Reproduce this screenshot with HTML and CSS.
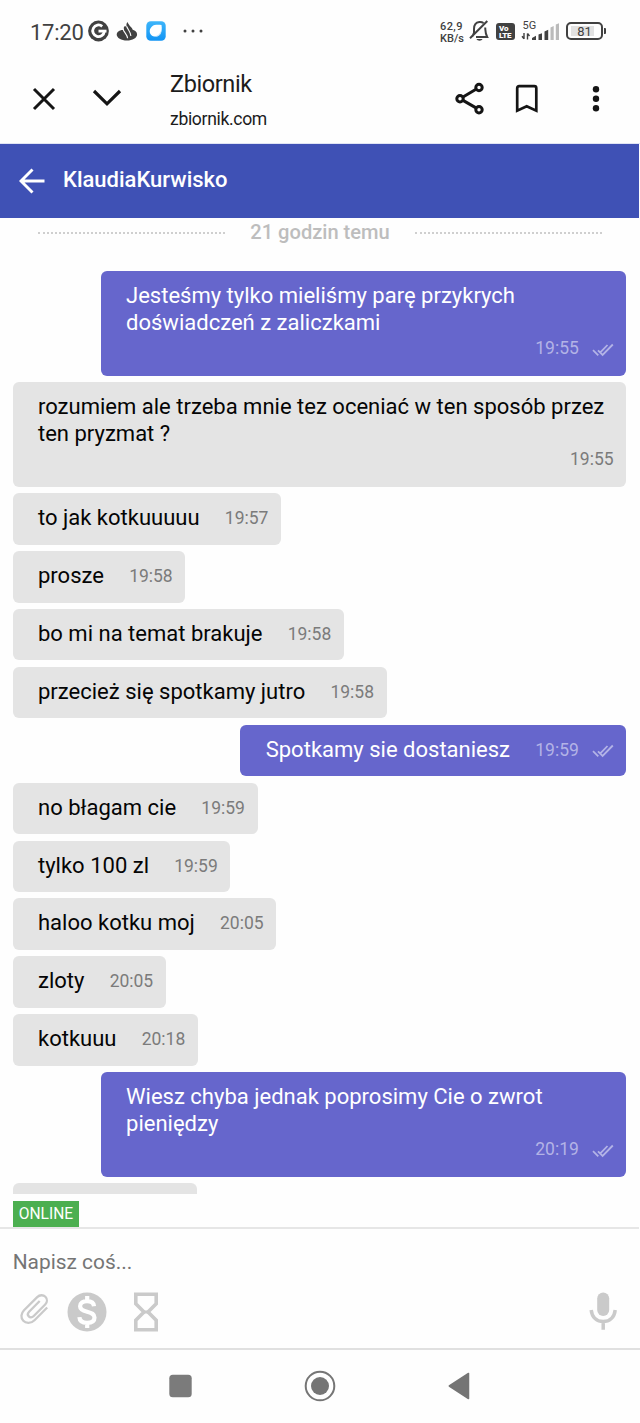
FILE: index.html
```html
<!DOCTYPE html>
<html lang="pl">
<head>
<meta charset="utf-8">
<title>Zbiornik</title>
<link rel="stylesheet" href="styles.css">
</head>
<body>
<svg width="0" height="0" class="defs">
  <symbol id="checks" viewBox="0 0 22 14"><path d="M1 7.2 6.3 12.4M6 7.3l4.6 4.6L20.8 1.5M8.6 9.2 15.5 2" fill="none" stroke="currentColor" stroke-width="1.8"/></symbol>
</svg>
<div class="phone">
  <div class="status">
    <span class="clock">17:20</span>
    <svg class="google" width="22" height="22" viewBox="0 0 22 22"><circle cx="10.500" cy="11" r="10.400" fill="#414141"/><path d="M14.200 6.300A5.800 5.800 0 1 0 16.300 11.300" fill="none" stroke="#fff" stroke-width="2.800"/><path d="M10.500 9.700h8v2.800h-8z" fill="#fff"/></svg>
    <svg class="flame" width="22" height="21" viewBox="0 0 22 21"><path d="M5.500 9C2.500 9.800.7 11.500.7 13.500c0 3.400 4.600 6 10.200 6s10.200-2.600 10.200-6c0-2.300-1.800-3.900-4.400-4.700C16.500 7 14 5.500 13.400 4.300 12.500 3 11.800 2 11.400 1 10 3 10.200 4.800 11.200 6.500L9 5C7.500 5.500 7.500 8 8 9Z" fill="#414141"/><path d="M7 7.500c.2 3.500 4.200 5.500 4.600 9.800M10.800 5.500c.8 3 3.600 4.800 4.100 9.500" fill="none" stroke="#fff" stroke-width="1.100"/></svg>
    <svg class="blueapp" width="20" height="20" viewBox="0 0 20 20"><defs><linearGradient id="sky" x1="0" y1="0" x2="0" y2="1"><stop stop-color="#3db5fa"/><stop offset="1" stop-color="#1294f4"/></linearGradient></defs><rect x=".3" y=".3" width="19.400" height="19.400" rx="4.500" fill="url(#sky)"/><path d="M6 5.500C8 3.500 12 3.800 15.500 4c.6 3.500.4 7.500-1.600 9.700-2.200 2.500-6.500 2.400-8.700.2C3 11.600 3.300 7.800 6 5.500Z" fill="#fff"/><path d="M15.200 9.500c-1 3.500-3.200 5.200-6.500 5.800 4.300.5 7-2.300 6.500-5.800Z" fill="#b8defa"/></svg>
    <svg class="dots" width="20" height="4" viewBox="0 0 20 4"><g fill="#414141"><circle cx="2" cy="2" r="1.500"/><circle cx="10" cy="2" r="1.500"/><circle cx="18" cy="2" r="1.500"/></g></svg>
    <div class="rate"><span>62,9</span><span>KB/s</span></div>
    <svg class="bell" width="21" height="22" viewBox="0 0 21 22"><path d="M3.300 16.500 5 13V9c0-3.500 1.800-6.500 5.300-7 1.400-.2 3 .1 4.200 1M16.200 7.500c.3 3.200-.1 5.500 2 9.500H7M1 18.200 18.300 1" fill="none" stroke="#414141" stroke-width="2"/><path d="M7.500 19h6c-.8 2.200-5.200 2.200-6 0Z" fill="#414141"/></svg>
    <div class="volte"><span>Vo</span><span>LTE</span></div>
    <div class="network"><span class="gen">5G</span>
      <svg width="38" height="19" viewBox="0 0 38 19"><path d="M3 10v6M1 13.200l2 2.600M6.500 16.500v-6M8.500 13l-2-2.600" stroke="#414141" stroke-width="1.400" fill="none"/><path d="M11 17v-2l4-2.200V17zM17.500 17v-5.500l3.500-1.300V17zM23.500 17V8.500l3.700-1.700V17z" fill="#414141"/><path d="M29.500 17V4.500L32.700 3v14zM34.800 17V1.500L38 .3V17z" fill="#bababa"/></svg>
    </div>
    <div class="battery"><i class="charge"></i><span>81</span></div><i class="nub"></i>
  </div>

  <div class="browser">
    <svg class="close" width="24" height="24" viewBox="0 0 24 24"><path d="M2 2l20 20M22 2 2 22" stroke="#151515" stroke-width="3"/></svg>
    <svg class="down" width="30" height="18" viewBox="0 0 30 18"><path d="M2 2l13 12.800L28 2" fill="none" stroke="#151515" stroke-width="3.200"/></svg>
    <div class="site"><div class="site-name">Zbiornik</div><div class="site-url">zbiornik.com</div></div>
    <svg class="share" width="30" height="33" viewBox="0 0 30 33"><g fill="none" stroke="#151515" stroke-width="3"><circle cx="5" cy="16.700" r="3.200"/><circle cx="24" cy="5.500" r="3.200"/><circle cx="24" cy="27.700" r="3.200"/><path d="M8 15 21 7.300M8 18.400l13 7.500"/></g></svg>
    <svg class="bookmark" width="24" height="30" viewBox="0 0 24 30"><path d="M2.200 26.700V4.200Q2.200 2.200 4.200 2.200H19.300Q21.300 2.200 21.300 4.200V26.700L11.700 22.200Z" fill="none" stroke="#151515" stroke-width="2.700"/></svg>
    <svg class="more" width="8" height="28" viewBox="0 0 8 28"><g fill="#151515"><circle cx="4" cy="4.300" r="3.200"/><circle cx="4" cy="13.800" r="3.200"/><circle cx="4" cy="23.200" r="3.200"/></g></svg>
  </div>

  <div class="header">
    <svg width="26" height="26" viewBox="0 0 26 26"><path d="M25.500 13H2.500M13.500 1.500 2 13l11.500 11.500" fill="none" stroke="#fff" stroke-width="2.900"/></svg>
    <span>KlaudiaKurwisko</span>
  </div>

  <div class="chat">
    <div class="divider"><i></i><span>21 godzin temu</span><i></i></div>
    <div class="messages">
      <div class="msg mine tall"><p>Jesteśmy tylko mieliśmy parę przykrych<br>doświadczeń z zaliczkami</p><div class="meta">19:55<svg><use href="#checks"/></svg></div></div>
      <div class="msg tall full"><p>rozumiem ale trzeba mnie tez oceniać w ten sposób przez<br>ten pryzmat ?</p><div class="meta">19:55</div></div>
      <div class="msg"><p>to jak kotkuuuuu</p><div class="meta">19:57</div></div>
      <div class="msg"><p>prosze</p><div class="meta">19:58</div></div>
      <div class="msg"><p>bo mi na temat brakuje</p><div class="meta">19:58</div></div>
      <div class="msg"><p>przecież się spotkamy jutro</p><div class="meta">19:58</div></div>
      <div class="msg mine"><p>Spotkamy sie dostaniesz</p><div class="meta">19:59<svg><use href="#checks"/></svg></div></div>
      <div class="msg"><p>no błagam cie</p><div class="meta">19:59</div></div>
      <div class="msg"><p>tylko 100 zl</p><div class="meta">19:59</div></div>
      <div class="msg"><p>haloo kotku moj</p><div class="meta">20:05</div></div>
      <div class="msg"><p>zloty</p><div class="meta">20:05</div></div>
      <div class="msg"><p>kotkuuu</p><div class="meta">20:18</div></div>
      <div class="msg mine tall"><p>Wiesz chyba jednak poprosimy Cie o zwrot<br>pieniędzy</p><div class="meta">20:19<svg><use href="#checks"/></svg></div></div>
      <div class="msg partial"></div>
    </div>
  </div>

  <div class="presence"><span>ONLINE</span></div>
  <div class="composer">
    <div class="placeholder">Napisz coś...</div>
    <div class="tools">
      <svg class="clip" width="30" height="32" viewBox="0 0 30 32"><path d="M27.200 14.500 14.500 27.200C11 30.700 5.800 30.500 3.300 27.800.6 25 .8 20.500 4 17.200L17.200 4.100c2.500-2.500 6.200-2.300 8.200-.3 2 2.100 2 5.500-.2 7.700L13.500 23.200c-1.500 1.500-3.600 1.400-4.700.2-1.200-1.200-1.200-3.200.3-4.700L19.700 8" fill="none" stroke="#cacaca" stroke-width="2.300"/></svg>
      <svg class="dollar" width="40" height="40" viewBox="0 0 40 40"><circle cx="20" cy="20" r="19.500" fill="#cacaca"/><path d="M27 14.200c-.3-3.500-3-5-7-5-4.200 0-6.900 1.900-6.900 5 0 3.500 3 4.500 7 5.500 4.700 1.200 7.400 2.300 7.400 5.900 0 3.500-3 5.300-7.400 5.300-4.600 0-7.500-2-7.700-5.700M20.200 4v5.500M20.200 30.500V36" fill="none" stroke="#fff" stroke-width="4.200"/></svg>
      <svg class="hourglass" width="24" height="40" viewBox="0 0 24 40"><path d="M1.800 2.200H22.200V11.700L14 20l8.200 8.300V37.800H1.800V28.300L10 20 1.800 11.700Z" fill="none" stroke="#cacaca" stroke-width="3.600"/><path d="M10 20h4" stroke="#cacaca" stroke-width="3"/></svg>
      <svg class="mic" width="28" height="38" viewBox="0 0 28 38"><rect x="8.200" y=".5" width="12" height="23.500" rx="6" fill="#cacaca"/><path d="M2.200 18C3 26 8.300 29.600 14.200 29.600S25.400 26 26.200 18M14.200 29v8.700" fill="none" stroke="#cacaca" stroke-width="3.500"/></svg>
    </div>
  </div>
  <div class="nav">
    <svg width="24" height="24" viewBox="0 0 24 24"><rect x="1.300" y=".8" width="22.400" height="22.400" rx="3.500" fill="#7b7b7b"/></svg>
    <svg width="32" height="32" viewBox="0 0 32 32"><circle cx="16" cy="16" r="14.300" fill="none" stroke="#757575" stroke-width="2"/><circle cx="16" cy="16" r="9" fill="#757575"/></svg>
    <svg width="22" height="28" viewBox="0 0 22 28"><path d="M20.500 1.500v25L1.300 14Z" fill="#757575" stroke="#757575" stroke-width="1.500" stroke-linejoin="round"/></svg>
  </div>
</div>
</body>
</html>
```

FILE: styles.css
```css
* { box-sizing: border-box; }
body { margin: 0; background: #fff; font-family: Roboto, sans-serif; color: #050505; }
svg { display: block; flex: none; }
.defs { position: absolute; }
.phone { width: 640px; height: 1423px; display: flex; flex-direction: column; background: #fefefe; overflow: hidden; }
.phone > div { flex: none; }

.status { height: 62px; display: flex; align-items: flex-start; color: #414141; }
.clock { margin: 20px 0 0 30px; width: 58px; font-size: 22px; line-height: 26px; letter-spacing: -0.25px; white-space: nowrap; }
.google { margin-top: 20px; }
.flame { margin: 21px 0 0 6px; }
.blueapp { margin: 21px 0 0 8px; }
.dots { margin: 29px 0 0 17px; }
.rate { margin: 21px 0 0 237px; width: 25px; font-size: 11px; font-weight: 500; line-height: 12px; white-space: nowrap; display: flex; flex-direction: column; }
.rate span:first-child { letter-spacing: 0.4px; }
.bell { margin: 20px 0 0 4px; }
.volte { margin: 23px 0 0 6px; width: 19px; height: 17px; border-radius: 3px; background: #414141; color: #fff; font-size: 8px; font-weight: 900; line-height: 7px; padding: 2px 0 0 3px; display: flex; flex-direction: column; }
.volte span:last-child { letter-spacing: -0.3px; }
.network { margin: 20px 0 0 6px; width: 38px; height: 22px; display: grid; }
.network > * { grid-area: 1 / 1; }
.network svg { margin-top: 3px; }
.gen { font-size: 11px; line-height: 12px; padding-left: 1.500px; }
.battery { margin: 22px 0 0 7px; width: 37px; height: 18px; border: 2px solid #414141; border-radius: 5px; display: grid; padding: 2px 3px; }
.battery > * { grid-area: 1 / 1; }
.battery span { font-size: 13px; line-height: 12px; text-align: center; }
.charge { width: 23px; height: 10px; background: #e2e2e2; }
.nub { margin: 28px 0 0 1px; width: 2px; height: 6px; background: #414141; border-radius: 0 1px 1px 0; }

.browser { height: 82px; display: flex; align-items: flex-start; color: #1c1c1c; border-bottom: 1px solid #e0e4f4; }
.close { margin: 25px 0 0 32px; }
.down { margin: 27px 0 0 36px; }
.site { width: 285px; margin: 7px 0 0 48px; }
.site-name { font-size: 23.500px; line-height: 30px; letter-spacing: -0.4px; }
.site-url { font-size: 17.600px; line-height: 22px; margin-top: 9px; letter-spacing: -0.35px; }
.share { margin: 20px 0 0 0; }
.bookmark { margin: 22px 0 0 30px; }
.more { margin: 23px 0 0 53px; }

.header { width: 639px; height: 74px; background: #3f51b5; display: flex; align-items: center; padding: 0 0 1px 19px; gap: 18px; color: #fff; font-size: 22px; font-weight: 500; }
.header span { padding-bottom: 2px; }
.chat { height: 976px; overflow: hidden; }
.divider { height: 53px; display: flex; align-items: flex-start; padding: 0 38px; gap: 25px; }
.divider i { flex: 1; height: 0; margin-top: 14px; border-top: 2px dotted #cfcfcf; }
.divider span { font-size: 20.100px; font-weight: 500; line-height: 28px; color: #bdbdbd; white-space: nowrap; }
.messages { display: flex; flex-direction: column; align-items: flex-start; gap: 6.400px; padding: 0 13.700px 0 12.700px; }
.msg { flex: none; height: 51.500px; border-radius: 6px; background: #e4e4e4; display: flex; padding: 12px 12.700px 0 25.300px; gap: 25.200px; white-space: nowrap; }
.msg p { margin: 0; font-size: 22.030px; line-height: 26.500px; }
.meta { font-size: 17.500px; line-height: 26px; color: #7b7b7b; display: flex; }
.meta svg { width: 22px; height: 14px; margin: 7px 0 0 13px; }
.mine { align-self: flex-end; background: #6666cc; color: #fff; padding-right: 12.500px; }
.mine .meta { color: #b3b3e6; }
.tall { width: 525.600px; height: 104.700px; flex-direction: column; gap: 0; }
.tall .meta { align-self: flex-end; line-height: 25px; }
.full { width: 100%; }
.partial { width: 184px; }

.presence { height: 35px; padding: 6.500px 0 0 12.700px; display: flex; border-bottom: 2px solid #e6e6e6; width: 639px; }
.presence span { width: 66.500px; height: 26.500px; background: #4caf50; color: #fff; font-size: 15.600px; line-height: 26.500px; text-align: center; }
.composer { height: 121px; padding-top: 19px; border-bottom: 2px solid #e0e0e0; }
.placeholder { padding-left: 12.700px; color: #757575; font-size: 20.900px; line-height: 28px; }
.tools { display: flex; align-items: flex-start; }
.clip { margin: 17px 0 0 20px; }
.dollar { margin: 16px 0 0 17px; }
.hourglass { margin: 16px 0 0 27px; }
.mic { margin: 16px 0 0 430.500px; }
.nav { height: 73px; display: flex; align-items: center; padding: 0 0 2px 168px; }
.nav svg:nth-child(2) { margin-left: 112px; }
.nav svg:nth-child(3) { margin-left: 112px; }
```
